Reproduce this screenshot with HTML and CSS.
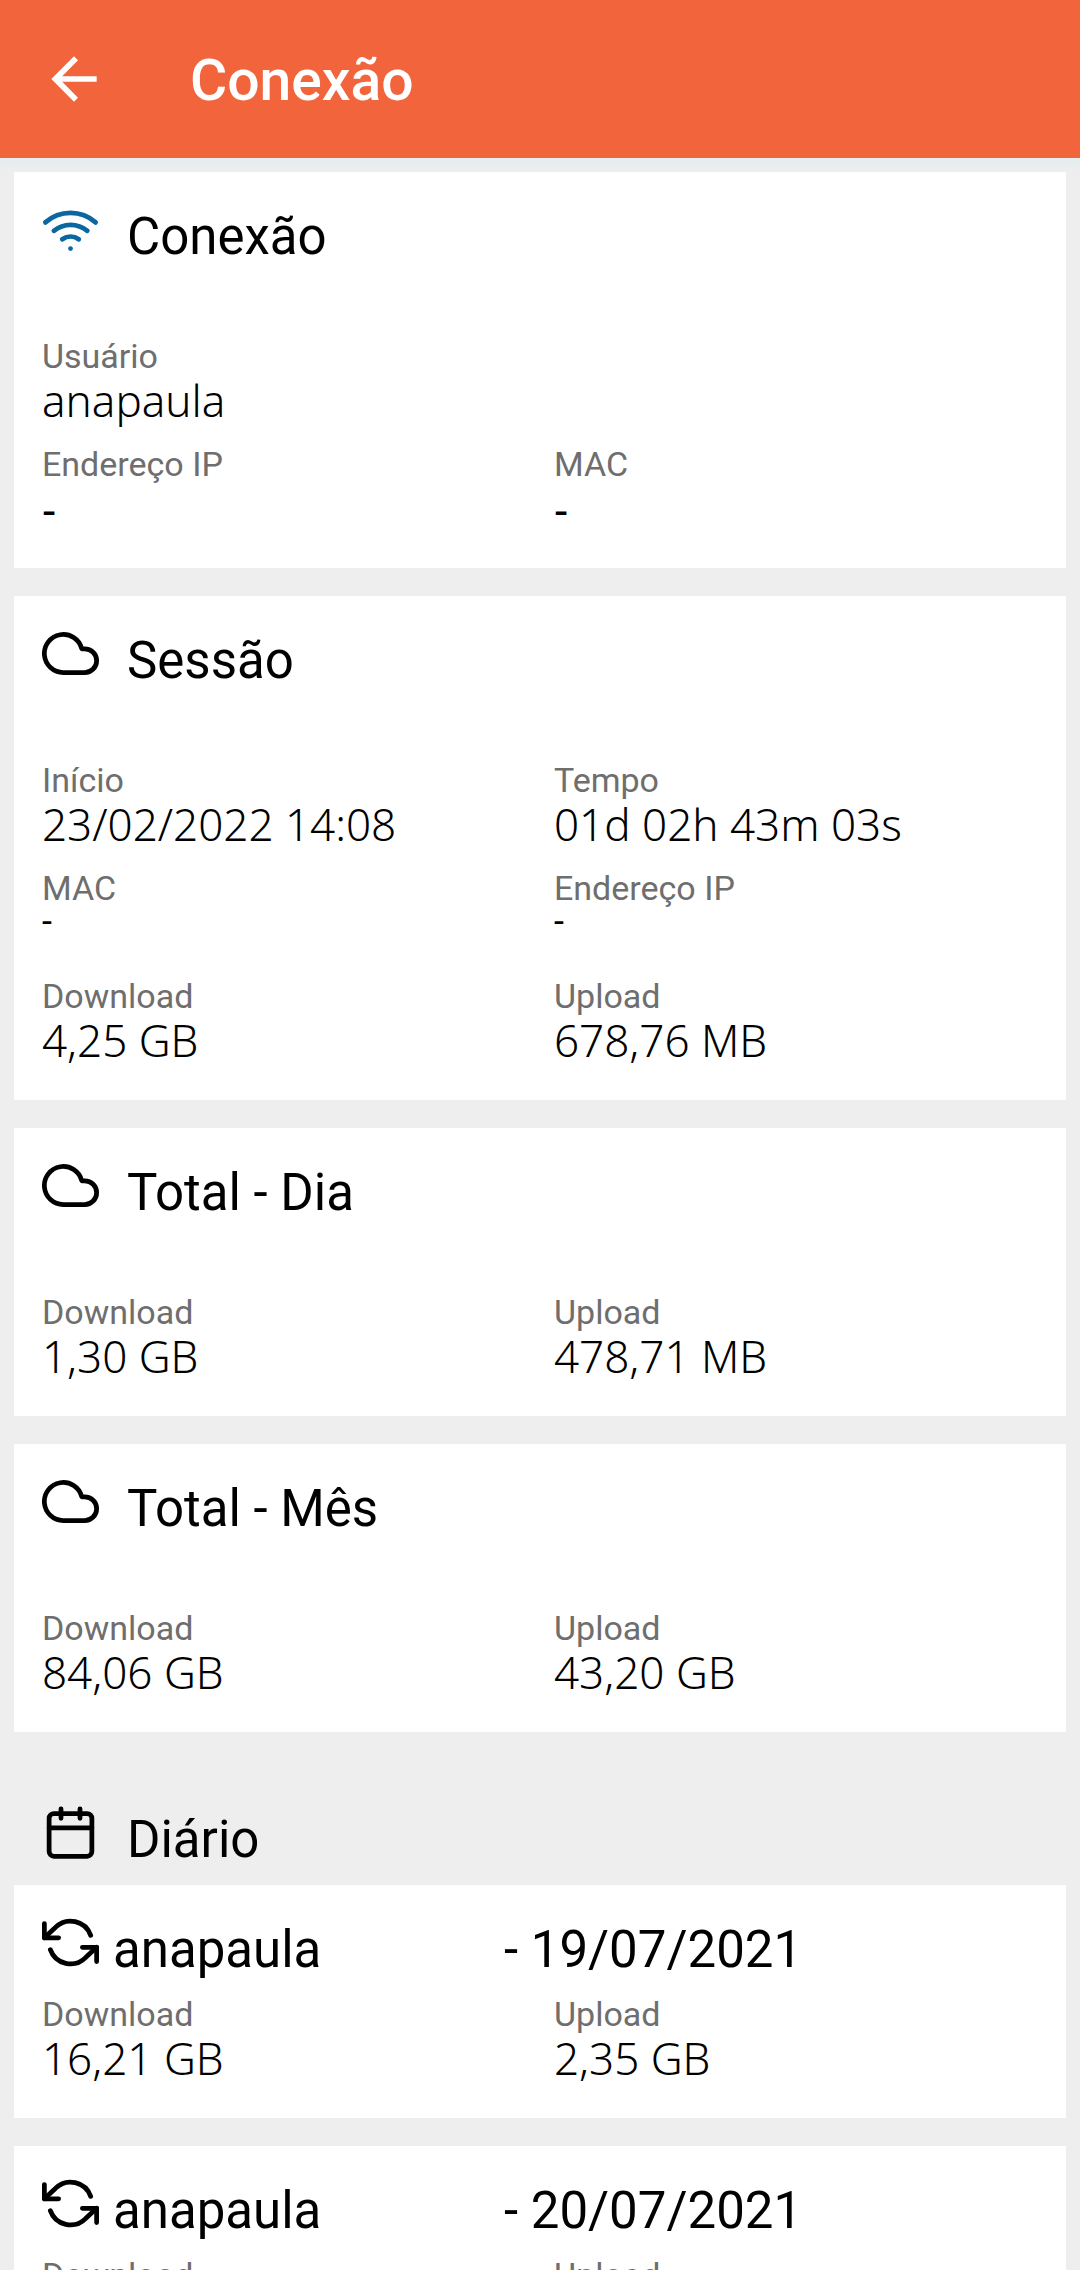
FILE: index.html
```html
<!DOCTYPE html>
<html lang="pt-BR">
<head>
    <meta charset="UTF-8">
    <meta name="viewport" content="width=device-width, initial-scale=1">
    <title>Conexão</title>
    <link rel="stylesheet" href="styles.css">
</head>
<body>
    <svg class="sprite" aria-hidden="true">
        <symbol id="wifi" viewBox="0 0 24 24">
            <path d="M5 12.55a11 11 0 0 1 14.08 0"/>
            <path d="M1.42 9a16 16 0 0 1 21.16 0"/>
            <path d="M8.53 16.11a6 6 0 0 1 6.95 0"/>
            <path d="M12 20h.01"/>
        </symbol>
        <symbol id="cloud" viewBox="0 0 24 24">
            <path d="M18 10h-1.26A8 8 0 1 0 9 20h9a5 5 0 0 0 0-10z"/>
        </symbol>
        <symbol id="calendar" viewBox="0 0 24 24">
            <rect x="3" y="4" width="18" height="18" rx="2"/>
            <path d="M16 2v4M8 2v4M3 10h18"/>
        </symbol>
        <symbol id="refresh" viewBox="0 0 24 24">
            <path d="M1 4v6h6"/>
            <path d="M23 20v-6h-6"/>
            <path d="M20.49 9A9 9 0 0 0 5.64 5.64L1 10m22 4l-4.64 4.36A9 9 0 0 1 3.51 15"/>
        </symbol>
    </svg>

    <header class="topbar">
        <button class="back" type="button" aria-label="Voltar">
            <svg viewBox="0 0 24 24"><path d="M20 11H7.83l5.59-5.59L12 4l-8 8 8 8 1.41-1.41L7.83 13H20v-2z"/></svg>
        </button>
        <h1>Conexão</h1>
    </header>

    <main class="content">
        <section class="card">
            <div class="card-title">
                <svg class="icon blue"><use href="#wifi"/></svg>
                <h2>Conexão</h2>
            </div>
            <dl class="info">
                <div class="full"><dt>Usuário</dt><dd>anapaula</dd></div>
                <div><dt>Endereço IP</dt><dd class="dash">-</dd></div>
                <div><dt>MAC</dt><dd class="dash">-</dd></div>
            </dl>
        </section>

        <section class="card">
            <div class="card-title">
                <svg class="icon"><use href="#cloud"/></svg>
                <h2>Sessão</h2>
            </div>
            <dl class="info">
                <div><dt>Início</dt><dd>23/02/2022 14:08</dd></div>
                <div><dt>Tempo</dt><dd>01d 02h 43m 03s</dd></div>
                <div><dt>MAC</dt><dd class="empty">-</dd></div>
                <div><dt>Endereço IP</dt><dd class="empty">-</dd></div>
                <div><dt>Download</dt><dd>4,25 GB</dd></div>
                <div><dt>Upload</dt><dd>678,76 MB</dd></div>
            </dl>
        </section>

        <section class="card">
            <div class="card-title">
                <svg class="icon"><use href="#cloud"/></svg>
                <h2>Total - Dia</h2>
            </div>
            <dl class="info">
                <div><dt>Download</dt><dd>1,30 GB</dd></div>
                <div><dt>Upload</dt><dd>478,71 MB</dd></div>
            </dl>
        </section>

        <section class="card">
            <div class="card-title">
                <svg class="icon"><use href="#cloud"/></svg>
                <h2>Total - Mês</h2>
            </div>
            <dl class="info">
                <div><dt>Download</dt><dd>84,06 GB</dd></div>
                <div><dt>Upload</dt><dd>43,20 GB</dd></div>
            </dl>
        </section>

        <section class="daily">
            <div class="card-title">
                <svg class="icon"><use href="#calendar"/></svg>
                <h2>Diário</h2>
            </div>

            <article class="card day">
                <div class="card-title">
                    <svg class="icon"><use href="#refresh"/></svg>
                    <h3><span class="name">anapaula</span>- 19/07/2021</h3>
                </div>
                <dl class="info">
                    <div><dt>Download</dt><dd>16,21 GB</dd></div>
                    <div><dt>Upload</dt><dd>2,35 GB</dd></div>
                </dl>
            </article>

            <article class="card day">
                <div class="card-title">
                    <svg class="icon"><use href="#refresh"/></svg>
                    <h3><span class="name">anapaula</span>- 20/07/2021</h3>
                </div>
                <dl class="info">
                    <div><dt>Download</dt><dd></dd></div>
                    <div><dt>Upload</dt><dd></dd></div>
                </dl>
            </article>
        </section>
    </main>
</body>
</html>
```
FILE: styles.css
```css
*{
    box-sizing: border-box;
    margin: 0;
    padding: 0;
}
body{
    height: 100vh;
    display: flex;
    flex-direction: column;
    overflow: hidden;
    background: #eee;
    color: #000;
    font-family: Roboto, "Liberation Sans", sans-serif;
}
.sprite{
    display: none;
}

/* top bar */
.topbar{
    flex: none;
    display: flex;
    align-items: center;
    gap: 82px;
    height: 158px;
    padding: 0 40px;
    background: #f2643b;
    color: #fff;
}
.back{
    width: 68px;
    height: 68px;
    border: 0;
    background: none;
    color: inherit;
    cursor: pointer;
}
.back svg{
    display: block;
    width: 68px;
    height: 68px;
    fill: currentColor;
}
.topbar h1{
    padding-top: 4px;
    font-size: 57px;
    line-height: 64px;
    font-weight: 500;
}

/* scrolling area */
.content{
    flex: 1;
    min-height: 0;
    overflow-y: auto;
    scrollbar-width: none;
    padding: 14px;
    background: linear-gradient(#e4edef, #eee 14px);
}
.card{
    margin-bottom: 28px;
    padding: 29px 0 35px 28px;
    background: #fff;
}
.card-title{
    display: flex;
    align-items: flex-start;
    gap: 28px;
    height: 67px;
}
.card-title h2,
.card-title h3{
    align-self: flex-end;
    font-size: 51px;
    line-height: 62px;
    font-weight: 400;
}
.icon{
    flex: none;
    width: 57px;
    height: 57px;
    fill: none;
    stroke: #000;
    stroke-width: 2;
    stroke-linecap: round;
    stroke-linejoin: round;
}
.blue{
    stroke: #0a679f;
}

/* label / value pairs */
.info{
    display: grid;
    grid-template-columns: 1fr 1fr;
    row-gap: 20px;
    margin-top: 69px;
}
.info .full{
    grid-column: 1 / 3;
}
.info div{
    height: 88px;
}
.info dt{
    font-size: 34px;
    line-height: 38px;
    color: #6e6e6e;
}
.info dd{
    font-family: "Noto Sans", "Open Sans", sans-serif;
    font-size: 44px;
    line-height: 50px;
    font-weight: 300;
}
.info .dash{
    font-weight: 400;
}
.info .empty{
    font-family: Roboto, sans-serif;
    font-size: 36px;
    line-height: 30px;
    font-weight: 400;
}

/* daily list */
.daily{
    padding-top: 44px;
}
.daily > .card-title{
    height: 81px;
    padding: 0 28px 14px;
}
.day .card-title{
    gap: 14px;
}
.day .info{
    margin-top: 14px;
}
.name{
    display: inline-block;
    min-width: 391px;
}
```
